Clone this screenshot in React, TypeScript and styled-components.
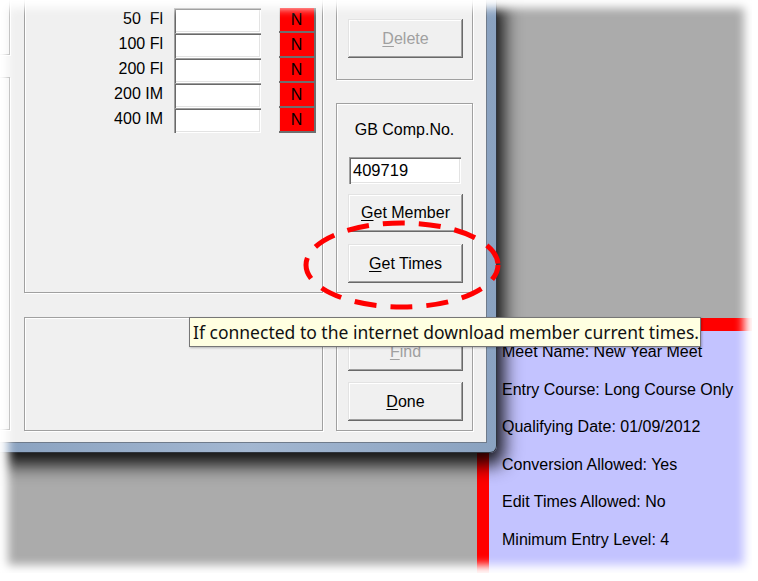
import React from 'react';
import styled, { createGlobalStyle } from 'styled-components';

const GlobalStyle = createGlobalStyle`
  html, body { margin: 0; padding: 0; background: #ffffff; }
  body { font-family: "Liberation Sans", Arial, sans-serif; }
  * { box-sizing: border-box; }
`;

const Picture = styled.div`
  position: relative;
  width: 752px;
  height: 573px;
  background: #ababab;
  overflow: hidden;
  display: flex;
  justify-content: flex-end;
  align-items: flex-end;
`;

const Vignette = styled.div`
  position: absolute;
  inset: 0;
  pointer-events: none;
  box-shadow: inset 0 0 10px 8px #ffffff;
`;

const InfoPanel = styled.div`
  width: 275px;
  height: 255px;
  background: #c3c3ff;
  border-left: 12px solid #ff0000;
  border-top: 13px solid #ff0000;
  padding: 2px 0 0 13px;
  display: flex;
  flex-direction: column;
`;

const InfoLine = styled.div`
  height: 37.5px;
  line-height: 37.5px;
  font-size: 16px;
  color: #000;
  white-space: nowrap;
`;

const Window = styled.div`
  position: absolute;
  left: 0;
  top: 0;
  width: 497px;
  height: 453px;
  padding: 0 9px 9px 0;
  background: linear-gradient(90deg, #8aa2c0 0%, #a3b7d1 50%, #8aa2c0 100%);
  border-right: 1px solid #2f353e;
  border-bottom: 1px solid #2f353e;
  border-bottom-right-radius: 7px;
  box-shadow: 3px 8px 18px 4px rgba(0, 0, 0, 0.9);
`;

const Client = styled.div`
  width: 487px;
  height: 443px;
  background: #f0f0f0;
  display: flex;
  padding-right: 13px;
  border-right: 1px solid #6f7b8b;
  border-bottom: 1px solid #6f7b8b;
`;

const StubColumn = styled.div`
  width: 10px;
  display: flex;
  flex-direction: column;
  margin-right: 14px;
`;

const StubBox = styled.div<{ $h: number; $top?: boolean; $mt?: number }>`
  height: ${p => p.$h}px;
  margin-top: ${p => p.$mt ?? 0}px;
  border-right: 1px solid #a0a0a0;
  border-bottom: 1px solid #a0a0a0;
  border-top: ${p => (p.$top ? '1px solid #a0a0a0' : 'none')};
  box-shadow: 1px 1px 0 #ffffff;
`;

const Column = styled.div<{ $w: number; $mr?: number }>`
  width: ${p => p.$w}px;
  margin-right: ${p => p.$mr ?? 0}px;
  display: flex;
  flex-direction: column;
`;

const GroupBox = styled.div<{ $h: number; $openTop?: boolean; $mt?: number }>`
  height: ${p => p.$h}px;
  margin-top: ${p => p.$mt ?? 0}px;
  border: 1px solid #a0a0a0;
  ${p => (p.$openTop ? 'border-top: none;' : '')}
  box-shadow: inset 1px 1px 0 #ffffff, 1px 1px 0 #ffffff;
  display: flex;
  flex-direction: column;
  align-items: flex-start;
`;

const EventList = styled.div`
  padding-top: 8px;
  display: flex;
  flex-direction: column;
`;

const EventRow = styled.div`
  display: flex;
  align-items: center;
  height: 25px;
`;

const EventLabel = styled.div`
  width: 138px;
  text-align: right;
  font-size: 16px;
  color: #000;
  white-space: pre;
  padding-bottom: 4px;
`;

const TimeBox = styled.div`
  margin-left: 11px;
  width: 87px;
  height: 25px;
  background: #ffffff;
  box-shadow: inset 1px 1px 0 #a0a0a0, inset 2px 2px 0 #696969, inset -1px -1px 0 #ffffff, inset -2px -2px 0 #e3e3e3;
`;

const Flag = styled.div`
  margin-left: 18px;
  width: 37px;
  height: 25px;
  background: #ff0000;
  color: #000;
  font-size: 16px;
  display: flex;
  align-items: center;
  justify-content: center;
  padding: 0 2px 2px 0;
  box-shadow: inset -2px -2px 0 #6e6e6e, inset 1px 0 0 #d8d8d8;
`;

const Button = styled.button<{ $h: number; $mt: number; $disabled?: boolean }>`
  margin-top: ${p => p.$mt}px;
  margin-left: 11px;
  width: 115px;
  height: ${p => p.$h}px;
  padding: 0;
  border: none;
  background: #f0f0f0;
  font-family: "Liberation Sans", Arial, sans-serif;
  font-size: 16px;
  color: ${p => (p.$disabled ? '#a0a0a0' : '#000000')};
  box-shadow: inset -1px -1px 0 #696969, inset 1px 1px 0 #e3e3e3, inset -2px -2px 0 #a0a0a0, inset 2px 2px 0 #ffffff;
  u { text-decoration-thickness: 1px; text-underline-offset: 2px; }
`;

const CompLabel = styled.div`
  align-self: stretch;
  text-align: center;
  margin-top: 17px;
  height: 18px;
  line-height: 18px;
  font-size: 16px;
  color: #000;
`;

const CompInput = styled.div`
  margin-top: 18px;
  margin-left: 12px;
  width: 112px;
  height: 27px;
  background: #ffffff;
  padding-left: 4px;
  line-height: 27px;
  font-size: 16.5px;
  color: #000;
  box-shadow: inset 1px 1px 0 #a0a0a0, inset 2px 2px 0 #696969, inset -1px -1px 0 #ffffff, inset -2px -2px 0 #e3e3e3;
`;

const Tooltip = styled.div`
  position: absolute;
  left: 189px;
  top: 317px;
  width: 512px;
  height: 30px;
  background: #ffffe1;
  border: 1px solid #767676;
  padding-left: 3px;
  line-height: 28px;
  font-family: "Noto Sans", "Open Sans", sans-serif;
  font-size: 17.5px;
  color: #111;
  white-space: nowrap;
  box-shadow: 1px 1px 2px rgba(0, 0, 0, 0.25);
`;

const Annotation = styled.svg`
  position: absolute;
  left: 298px;
  top: 215px;
  width: 210px;
  height: 100px;
  overflow: visible;
`;

const events = ['50  Fl', '100 Fl', '200 Fl', '200 IM', '400 IM'];
const info = [
  'Meet Name: New Year Meet',
  'Entry Course: Long Course Only',
  'Qualifying Date: 01/09/2012',
  'Conversion Allowed: Yes',
  'Edit Times Allowed: No',
  'Minimum Entry Level: 4',
];

export default function App() {
  return (
    <>
      <GlobalStyle />
      <Picture>
        <InfoPanel>
          {info.map(t => (
            <InfoLine key={t}>{t}</InfoLine>
          ))}
        </InfoPanel>
        <Window>
          <Client>
            <StubColumn>
              <StubBox $h={55} />
              <StubBox $h={353} $mt={22} $top />
            </StubColumn>
            <Column $w={299} $mr={13}>
              <GroupBox $h={293} $openTop>
                <EventList>
                  {events.map(e => (
                    <EventRow key={e}>
                      <EventLabel>{e}</EventLabel>
                      <TimeBox />
                      <Flag>N</Flag>
                    </EventRow>
                  ))}
                </EventList>
              </GroupBox>
              <GroupBox $h={114} $mt={24} />
            </Column>
            <Column $w={137}>
              <GroupBox $h={80} $openTop>
                <Button $h={39} $mt={19} $disabled>
                  <u>D</u>elete
                </Button>
              </GroupBox>
              <GroupBox $h={190} $mt={23}>
                <CompLabel>GB Comp.No.</CompLabel>
                <CompInput>409719</CompInput>
                <Button $h={38} $mt={10}>
                  <u>G</u>et Member
                </Button>
                <Button $h={39} $mt={12}>
                  <u>G</u>et Times
                </Button>
              </GroupBox>
              <GroupBox $h={114} $mt={24}>
                <Button $h={38} $mt={15} $disabled>
                  <u>F</u>ind
                </Button>
                <Button $h={39} $mt={11}>
                  <u>D</u>one
                </Button>
              </GroupBox>
            </Column>
          </Client>
        </Window>
        <Tooltip>If connected to the internet download member current times.</Tooltip>
        <Annotation viewBox="0 0 210 100">
          <ellipse cx="104" cy="50" rx="96" ry="42" fill="none" stroke="#ff0000" strokeWidth="5" strokeDasharray="22 14" strokeDashoffset="6" />
        </Annotation>
        <Vignette />
      </Picture>
    </>
  );
}
